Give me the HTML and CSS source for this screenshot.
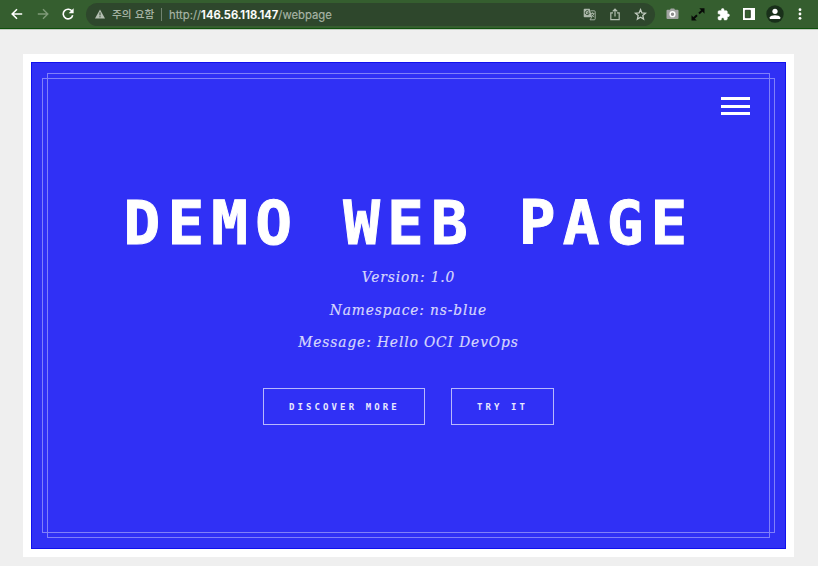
FILE: index.html
```html
<!DOCTYPE html>
<html lang="ko">
<head>
<meta charset="utf-8">
<title>Demo Web Page</title>
<link rel="stylesheet" href="styles.css">
</head>
<body>
<header class="toolbar">
  <nav class="nav">
    <svg width="12" height="12" viewBox="0 0 12 12" fill="none" stroke="#fff" stroke-width="1.6"><path d="M11.2 6H1.2M6 1.2L1.2 6L6 10.8"/></svg>
    <svg width="12" height="12" viewBox="0 0 12 12" fill="none" stroke="#7f9a78" stroke-width="1.4"><path d="M.8 6h10M6 1.2L10.8 6L6 10.8"/></svg>
    <svg width="12" height="12" viewBox="0 0 12 12"><path d="M10.2 3.6A4.8 4.8 0 1 0 10.7 7.2" fill="none" stroke="#fff" stroke-width="1.6"/><path d="M11.6 .3v5H6.6z" fill="#fff"/></svg>
  </nav>
  <div class="omnibox">
    <svg class="warn" width="10" height="10" viewBox="0 0 10 10"><path d="M5 .4L10 9.4H0z" fill="#b4beb2"/><path d="M5 3.4v3M5 7.2v1.1" stroke="#2e472c"/></svg>
    <span class="caution">주의 요함</span>
    <span class="sep"></span>
    <span class="url">http://<b>146.56.118.147</b>/webpage</span>
    <span class="actions">
      <svg width="13" height="13" viewBox="0 0 13 13"><path d="M1.5.7h5.2l2.4 8.6H1.5a.8.8 0 0 1-.8-.8v-7a.8.8 0 0 1 .8-.8z" fill="#adb9ab"/><path d="M6.2 4.9h-2M5.8 3.4A2 2 0 1 0 6.2 5" fill="none" stroke="#2e472c" stroke-width=".9"/><path d="M7.5 2.8h3.7a1 1 0 0 1 1 1v7a1 1 0 0 1-1 1H7l1.8-2.6M7.8 5.4h3.5M9.5 4.4v1M11 5.5C10.6 7 9.6 8 8.6 8.8M8.7 6.5l2.3 2.7" fill="none" stroke="#adb9ab" stroke-width=".9"/></svg>
      <svg width="12" height="13" viewBox="0 0 12 13" fill="none" stroke="#b2beb0" stroke-width="1.2"><path d="M4 4.8H1.8v6.8h8.4V4.8H8M6 8.5V1.2M3.7 3.4L6 1.1l2.3 2.3"/></svg>
      <svg width="13" height="13" viewBox="0 0 13 13" fill="none" stroke="#c3cdc1" stroke-width="1.3"><path d="M6.5 1.6l1.4 3.3 3.6.3-2.7 2.4.8 3.5-3.1-1.9-3.1 1.9.8-3.5L1.5 5.2l3.6-.3z"/></svg>
    </span>
  </div>
  <div class="tools">
    <svg width="13" height="12" viewBox="0 0 13 12"><path d="M4 1.8L4.8.5h3.4L9 1.8h2.5a1 1 0 0 1 1 1V10a1 1 0 0 1-1 1h-10a1 1 0 0 1-1-1V2.8a1 1 0 0 1 1-1z" fill="#a3a5a3"/><circle cx="6.5" cy="6.2" r="2.4" fill="#8b8b8b" stroke="#fff" stroke-width="1.4"/></svg>
    <svg width="14" height="13" viewBox="0 0 14 13" fill="#080b08"><path d="M13.5.3v5.4L8.3.3zM.5 12.6V7.200l5.200 5.400z"/><path d="M8 5.600l3.500-3.300M6 7.300l-3.500 3.300" stroke="#080b08" stroke-width="2"/></svg>
    <svg width="13" height="13" viewBox="0 0 24 24"><path d="M20.5 11H19V7c0-1.1-.9-2-2-2h-4V3.5a2.5 2.5 0 0 0-5 0V5H4c-1.1 0-2 .9-2 2v3.8h1.5a2.7 2.7 0 0 1 0 5.4H2V20c0 1.1.9 2 2 2h3.8v-1.5a2.7 2.7 0 0 1 5.4 0V22H17c1.1 0 2-.9 2-2v-4h1.5a2.5 2.5 0 0 0 0-5z" fill="#fff" stroke="#fff"/></svg>
    <svg width="12" height="12" viewBox="0 0 12 12"><path d="M0 0h12v12H0z" fill="#fff"/><path d="M2.3 2.3h5v7.4h-5z" fill="#355e2f" stroke="#182f15" stroke-width=".8"/></svg>
    <svg width="18" height="18" viewBox="0 0 18 18"><circle cx="9" cy="9" r="8.7" fill="#19301a"/><circle cx="9" cy="6.3" r="2.6" fill="#fff"/><path d="M3.8 14v-1.7C4.2 9.5 13.8 9.5 14.2 12.3V14z" fill="#fff"/></svg>
    <svg width="4" height="12" viewBox="0 0 4 12" fill="#fff"><circle cx="2" cy="1.7" r="1.4"/><circle cx="2" cy="6" r="1.4"/><circle cx="2" cy="10.3" r="1.4"/></svg>
  </div>
</header>
<main class="frame">
  <section class="hero">
    <div class="outline tall"></div>
    <div class="outline wide"></div>
    <button class="menu" aria-label="Menu"><i></i><i></i><i></i></button>
    <h1>DEMO WEB PAGE</h1>
    <div class="info">
      <p class="version">Version: 1.0</p>
      <p class="namespace">Namespace: ns-blue</p>
      <p class="message">Message: Hello OCI DevOps</p>
    </div>
    <div class="buttons">
      <a class="btn more">DISCOVER MORE</a>
      <a class="btn try">TRY IT</a>
    </div>
  </section>
</main>
</body>
</html>
```
FILE: styles.css
```css
* { box-sizing: border-box; }
body { margin: 0; height: 566px; overflow: hidden; background: #efefef; }
svg { display: block; flex: none; }

.toolbar {
  display: flex;
  align-items: center;
  height: 30px;
  padding-bottom: 1px;
  background: #355e2f;
  border-bottom: 1px solid #c4ccc3;
  box-shadow: inset 0 -1px #0d500b;
}
.nav { display: flex; gap: 14px; width: 86px; padding-left: 11px; }
.nav svg:last-child { margin-left: -1px; }
.omnibox {
  display: flex;
  align-items: center;
  width: 569px;
  height: 23px;
  padding-left: 9px;
  border-radius: 12px;
  background: #2e472c;
  color: #a7b4a5;
  font: 11.3px/22px Inter, "Noto Sans CJK KR", sans-serif;
  white-space: nowrap;
}
.caution { width: 43px; margin-left: 7px; font: 500 10.7px/22px "Noto Sans CJK KR", sans-serif; }
.sep { width: 1px; height: 13px; margin: 0 7px 0 6px; background: #71836f; }
.url { padding-top: 1px; -webkit-text-stroke: .15px; }
.url b { color: #fff; font-weight: 600; }
.actions { display: flex; align-items: center; gap: 13px; margin-left: auto; padding-right: 8px; }
.tools { display: flex; align-items: center; margin-left: 11px; }
.tools svg:nth-child(2) { margin-left: 12px; }
.tools svg:nth-child(3) { margin-left: 12px; }
.tools svg:nth-child(4) { margin-left: 13px; }
.tools svg:nth-child(5) { margin-left: 11px; }
.tools svg:nth-child(6) { margin-left: 14px; }

.frame { width: 771px; height: 503px; margin: 24px 0 0 23px; padding: 8px; background: #fff; }
.hero {
  position: relative;
  display: flex;
  flex-direction: column;
  align-items: center;
  height: 487px;
  background: #3030f5;
  border: 1px solid #1010ee;
  color: #fff;
}
.outline { position: absolute; border: 1px solid #8080f9; }
.tall { inset: 10px 15px 10px 15px; }
.wide { inset: 15px 10px 15px 10px; }
.menu {
  align-self: flex-end;
  display: grid;
  gap: 4.5px;
  width: 29px;
  margin: 34px 35px 0 0;
  padding: 0;
  border: 0;
  background: none;
}
.menu i { height: 3px; background: #fff; }
h1 {
  margin: 70px 0 0;
  width: 571px;
  height: 77px;
  font: bold 61px/76px "DejaVu Sans Mono", monospace;
  letter-spacing: 7.2px;
  text-indent: .5px;
  white-space: nowrap;
  -webkit-text-stroke: 1px #fff;
}
.info {
  margin-top: -1px;
  text-align: center;
  color: #d6d6fd;
  font: italic 15.3px/32.5px "DejaVu Serif Condensed", "DejaVu Serif", serif;
  font-stretch: condensed;
  letter-spacing: .9px;
  -webkit-text-stroke: .2px;
}
.info p { margin: 0; }
.buttons { display: flex; gap: 26px; margin-top: 29px; }
.btn {
  height: 37px;
  padding-left: 25px;
  border: 1px solid #b8b8fc;
  font: bold 9px/37px "DejaVu Sans Mono", monospace;
  letter-spacing: 3.1px;
  color: #e8e8fe;
}
.more { width: 162px; }
.try { width: 103px; }
```
